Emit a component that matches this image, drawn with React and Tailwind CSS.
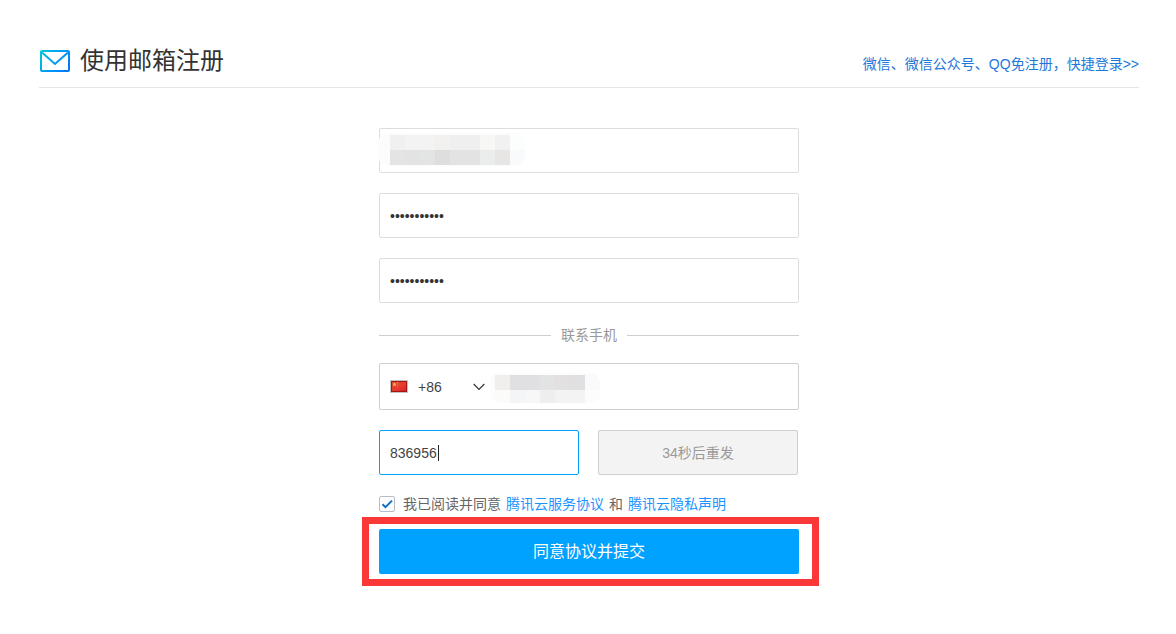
import { useState } from "react";

// Redacted values are drawn as 15px blocks, row by row
const EMAIL_BLOCKS = [
  ["#f0f0f0", "#f3f3f3", "#f3f3f3", "#f3f1ef", "#efefef", "#efefef", "#f7f7f5", "#f1f1f1", "#fcfdfd"],
  ["#e4e4e4", "#e3e3e3", "#e3e5e4", "#dedede", "#e3e3e3", "#e3e3e3", "#ebedec", "#e8e6e5", "#f9fafc"],
];
const PHONE_BLOCKS = [
  ["#f1efee", "#e0e0e3", "#e0e0e2", "#e2e4e3", "#e2e0e0", "#e0e0e2", "#f9fafa"],
  ["#fbfbfa", "#f4f5f6", "#f7f7f7", "#eeeeef", "#f3f3f3", "#f3f3f3", "#fbfcfc"],
];

const FIELD =
  "h-[45px] w-full rounded-xs border border-[#dddddd] bg-white px-[10px] text-sm text-[#333333] outline-none";

function Mosaic({ id, rows, lead, height, className }) {
  const width = rows[0].length * 15 + lead;
  return (
    <svg className={className} width={width} height={height} aria-hidden="true">
      <clipPath id={id}>
        <rect width={width} height={height} rx="10" />
      </clipPath>
      <g clipPath={`url(#${id})`}>
        <rect width={width} height={height} fill="#fcfcfc" />
        {rows.map((row, y) =>
          row.map((color, x) => (
            <rect key={`${x}-${y}`} x={lead + x * 15} y={2 + y * 15} width="15" height="15" fill={color} />
          ))
        )}
      </g>
    </svg>
  );
}

function MailIcon() {
  return (
    <svg width="32" height="24" viewBox="0 0 32 24" fill="none" aria-hidden="true">
      <defs>
        <linearGradient id="mail" x1="0" y1="0" x2="32" y2="24" gradientUnits="userSpaceOnUse">
          <stop offset="0" stopColor="#00cdda" />
          <stop offset="0.5" stopColor="#009cf5" />
          <stop offset="1" stopColor="#006eff" />
        </linearGradient>
      </defs>
      <rect x="2" y="2" width="28" height="20" rx="1" stroke="url(#mail)" strokeWidth="2" />
      <path d="M3 3.500l13 11.500L29 3.500" stroke="url(#mail)" strokeWidth="2" />
    </svg>
  );
}

function Flag() {
  return (
    <svg width="18" height="13" viewBox="0 0 18 13" aria-hidden="true">
      <defs>
        <linearGradient id="flag" x1="0" y1="0" x2="1" y2="1">
          <stop offset="0" stopColor="#d9402c" />
          <stop offset="0.55" stopColor="#ea3a30" />
          <stop offset="1" stopColor="#d42020" />
        </linearGradient>
      </defs>
      <rect width="18" height="13" fill="#c4c4be" />
      <rect x="1" y="1" width="16" height="11" fill="#a31616" />
      <rect x="2" y="2" width="14" height="9" fill="url(#flag)" />
      <path d="M4.500 2l.7 1.500 1.600.2-1.200 1.100.3 1.600-1.400-.8-1.400.8.3-1.600-1.200-1.100 1.600-.2z" fill="#f5b050" />
      <path d="M7 2h1v1h-1zM8 3.500h1v1h-1zM7 5.500h1v1h-1z" fill="#f09a48" />
    </svg>
  );
}

export default function App() {
  const [email, setEmail] = useState("");
  const [password, setPassword] = useState("qcloud12345");
  const [confirm, setConfirm] = useState("qcloud12345");
  const [phone, setPhone] = useState("");
  const [code, setCode] = useState("836956");
  const [agreed, setAgreed] = useState(true);

  return (
    <div
      lang="zh-CN"
      className="pt-[46px] pr-[37px] pb-12 pl-[39px] font-['Liberation_Sans','Noto_Sans_CJK_SC',sans-serif] text-sm text-[#666666]"
    >
      {/* Header */}
      <header className="flex items-start justify-between border-b border-[#e5e5e5] pb-[11px]">
        <div className="flex items-center gap-[9px]">
          <MailIcon />
          <h1 className="text-2xl leading-[30px] font-normal text-[#333333]">使用邮箱注册</h1>
        </div>
        <a href="#quick" className="mt-2 leading-5 text-[#2277da]">
          微信、微信公众号、QQ免注册，快捷登录&gt;&gt;
        </a>
      </header>

      <form className="mx-auto mt-10 w-full max-w-[420px]" onSubmit={(e) => e.preventDefault()}>
        {/* Account */}
        <div className="flex flex-col gap-5">
          <div className="relative h-[45px]">
            <input
              type="email"
              aria-label="邮箱"
              className={FIELD}
              value={email}
              onChange={(e) => setEmail(e.target.value)}
            />
            <Mosaic
              id="email-mask"
              rows={EMAIL_BLOCKS}
              lead={12}
              height={33}
              className="pointer-events-none absolute top-[5px] left-[-1px]"
            />
          </div>
          <input
            type="password"
            aria-label="密码"
            className={FIELD}
            value={password}
            onChange={(e) => setPassword(e.target.value)}
          />
          <input
            type="password"
            aria-label="确认密码"
            className={FIELD}
            value={confirm}
            onChange={(e) => setConfirm(e.target.value)}
          />
        </div>

        {/* Phone */}
        <div className="mt-[22px] mb-[18px] flex items-center gap-[10px] text-[#999999]">
          <span className="h-px flex-1 bg-[#cfcfcf]" />
          <span className="leading-5">联系手机</span>
          <span className="h-px flex-1 bg-[#cfcfcf]" />
        </div>
        <div className="relative flex h-[47px] items-center rounded-xs border border-[#cfcfcf] pl-[10px]">
          <Flag />
          <select
            aria-label="国家代码"
            defaultValue="+86"
            className="ml-[10px] w-[55px] appearance-none bg-transparent text-[#444444] outline-none"
          >
            <option>+86</option>
          </select>
          <svg width="12" height="8" viewBox="0 0 12 8" fill="none" stroke="#333333" strokeWidth="1.2" aria-hidden="true">
            <path d="M.7 1L6 6.300 11.300 1" />
          </svg>
          <input
            type="tel"
            aria-label="手机号码"
            className="h-full min-w-0 flex-1 bg-transparent px-[10px] outline-none"
            value={phone}
            onChange={(e) => setPhone(e.target.value)}
          />
          <Mosaic
            id="phone-mask"
            rows={PHONE_BLOCKS}
            lead={5}
            height={30}
            className="pointer-events-none absolute top-[9px] left-[110px]"
          />
        </div>

        {/* Verification code */}
        <div className="mt-5 flex gap-[19px]">
          <div className="relative w-[200px]">
            <input
              type="text"
              aria-label="验证码"
              autoFocus
              className="h-[45px] w-full rounded-xs border border-[#dddddd] px-[10px] text-[#444444] caret-transparent outline-none focus:border-[#00a4ff]"
              value={code}
              onChange={(e) => setCode(e.target.value)}
            />
            <span className="pointer-events-none absolute top-[15px] left-[59px] h-4 w-px bg-[#222222]" />
          </div>
          <button
            type="button"
            disabled
            className="h-[45px] w-[200px] rounded-xs border border-[#cfcfcf] bg-[#f3f3f3] text-[#999999]"
          >
            34秒后重发
          </button>
        </div>

        {/* Agreement */}
        <div className="mt-[19px] flex items-center gap-2 leading-5">
          <span className="relative flex size-4">
            <input
              id="agree"
              type="checkbox"
              checked={agreed}
              onChange={(e) => setAgreed(e.target.checked)}
              className="peer size-4 appearance-none rounded-xs border border-[#b6bdc9] bg-white"
            />
            <svg
              className="pointer-events-none absolute inset-0 hidden peer-checked:block"
              width="16"
              height="16"
              viewBox="0 0 16 16"
              fill="none"
              stroke="#0c6fc4"
              strokeWidth="2"
              aria-hidden="true"
            >
              <path d="M3.500 8.200l3 3L13 4.600" />
            </svg>
          </span>
          <div className="flex gap-[5px]">
            <label htmlFor="agree">我已阅读并同意</label>
            <a href="#terms" className="text-[#1a94ff]">腾讯云服务协议</a>
            <span>和</span>
            <a href="#privacy" className="text-[#1a94ff]">腾讯云隐私声明</a>
          </div>
        </div>

        {/* Submit, outlined in red */}
        <div className="mt-[3px] -mr-5 -ml-[17px] border-7 border-[#fb3838] py-[5px] pr-[13px] pl-[10px]">
          <button type="submit" className="block h-[45px] w-full rounded-xs bg-[#00a2ff] text-base text-white">
            同意协议并提交
          </button>
        </div>
      </form>
    </div>
  );
}
